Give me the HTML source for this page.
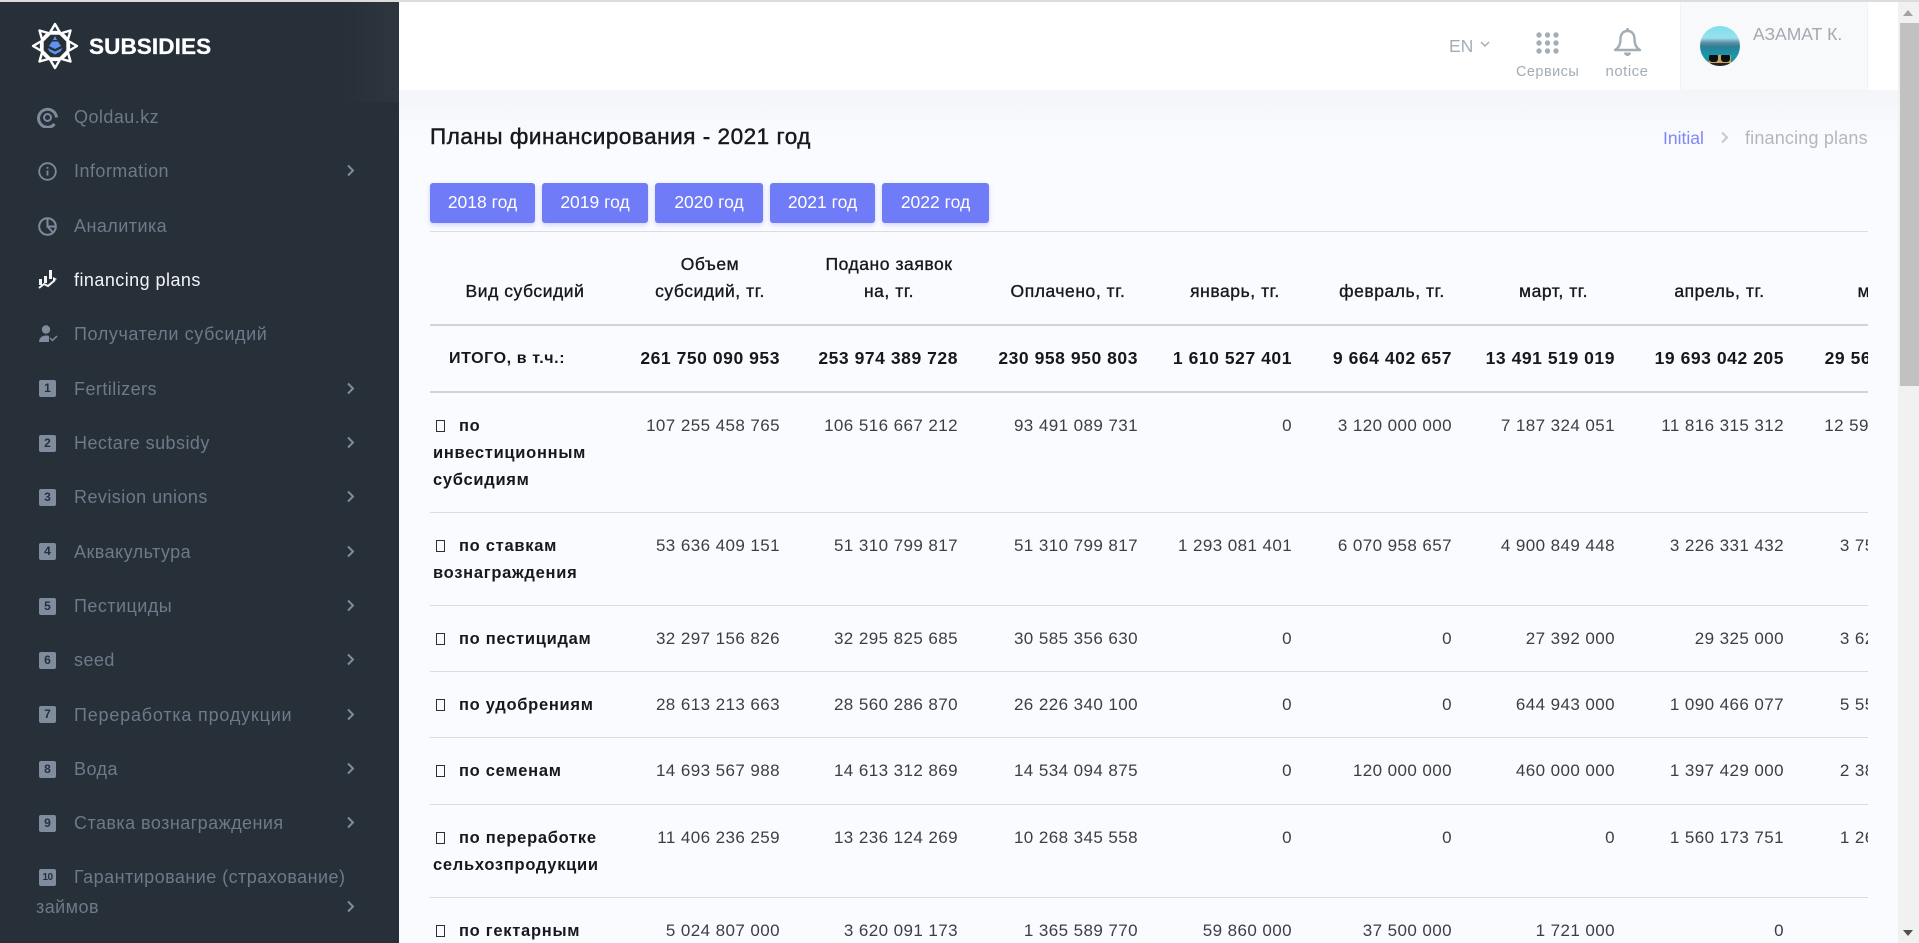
<!DOCTYPE html>
<html lang="ru"><head><meta charset="utf-8"><title>Subsidies</title>
<style>
*{box-sizing:border-box}
html,body{margin:0;padding:0;width:1919px;height:943px;overflow:hidden;background:#f9fbfe;font-family:"Liberation Sans",sans-serif}
.abs{position:absolute}
#top{position:absolute;left:0;top:0;width:1919px;height:2px;background:#dcdcdc}
#side{position:absolute;left:0;top:2px;width:399px;height:941px;background:#272f38;overflow:hidden}
#side .glow{position:absolute;left:340px;top:0;width:59px;height:100px;background:linear-gradient(90deg,#272f38,#2d353e)}
.it{position:absolute;left:74px;height:28px;line-height:28px;font-size:18px;letter-spacing:.45px;color:#6d7a8a;white-space:nowrap}
.it.on{color:#f2f4f6}
.b{position:absolute;left:39px;width:17px;height:17px;border-radius:2px;background:#7f8c9e;color:#272f38;font-size:12px;font-weight:bold;line-height:17px;text-align:center}
.ch{position:absolute;left:346px;width:9px;height:13px}
.ic{position:absolute}
#logo{position:absolute;left:89px;top:34px;font-size:22.5px;font-weight:bold;color:#fff;line-height:26px;letter-spacing:.1px;-webkit-text-stroke:.3px #fff}
#hdr{position:absolute;left:399px;top:2px;width:1499px;height:88px;background:#fff}
#prof{position:absolute;left:1680px;top:2px;width:188px;height:88px;background:#f8f9fb;border-left:1px solid #f0f2f5;border-right:1px solid #f0f2f5}
#strip{position:absolute;left:399px;top:90px;width:1499px;height:50px;background:linear-gradient(#f4f5f8,#f9fbfe)}
.hl{position:absolute;color:#a3adb5;white-space:nowrap}
#title{position:absolute;left:430px;top:123px;font-size:22.5px;line-height:28px;color:#15181c;-webkit-text-stroke:.45px #15181c;letter-spacing:.53px;white-space:nowrap}
.btn{position:absolute;top:183px;height:40px;background:#6f7bf7;border-radius:3px;color:#fff;font-size:17.5px;line-height:39px;text-align:center;box-shadow:0 2px 5px rgba(111,123,247,.3)}
#wrap{position:absolute;left:430px;top:231px;width:1438px;height:712px;overflow:hidden}
table{border-collapse:collapse;table-layout:fixed;width:1544px;position:absolute;left:0;top:0;color:#2b3038;font-size:17px;line-height:27px}
th,td{padding:0 20px;text-align:right;vertical-align:top;white-space:nowrap;letter-spacing:.42px}
th{height:93px;vertical-align:bottom;text-align:center;padding-bottom:19px;font-size:17.5px;font-weight:normal;color:#15181c;-webkit-text-stroke:.35px #15181c;border-top:1.5px solid #dadee4;border-bottom:2px solid #cfd4da;line-height:27px;letter-spacing:.55px}
tr.tot td{height:67px;font-weight:bold;color:#15181c;vertical-align:middle;border-bottom:2px solid #cfd4da;font-size:17.5px;letter-spacing:.55px;padding-left:0}
tr.r td{padding-top:19px;border-bottom:1.5px solid #d8dce3;color:#3a3f47}
td.n{text-align:left;padding:20px 0 0 3px!important;font-weight:bold;font-size:16.5px;color:#15181c!important;letter-spacing:.72px;overflow:hidden}
.tf{display:inline-block;width:9px;height:12px;border:1px solid #2b3038;margin:0 14px 0 3px;vertical-align:-1px}
#sb{position:absolute;left:1898px;top:2px;width:21px;height:941px;background:#f1f1f1}
#th{position:absolute;left:1900px;top:23px;width:19px;height:363px;background:#c1c1c1}
</style></head>
<body>
<div id="top"></div>
<div id="hdr"></div>
<div id="strip"></div>
<div id="prof"></div>

<div id="side"><div class="glow"></div></div>
<div class="abs" style="left:0;top:0;width:399px;height:943px;overflow:hidden;margin-top:0">
<svg class="ic" style="left:31px;top:22px" width="48" height="48" viewBox="0 0 48 48" fill="none" stroke="#fff" stroke-width="2.4" stroke-linejoin="round"><circle cx="24" cy="24" r="14"/><path d="M24 2l5.5 9.5h-11zM24 46l5.5-9.500h-11zM2 24l9.500-5.500v11zM46 24l-9.500-5.500v11zM8.500 8.500l10.500 3-7.500 7.500zM39.500 8.500l-10.500 3 7.500 7.500zM8.500 39.500l10.500-3-7.500-7.500zM39.500 39.500l-10.500-3 7.500-7.500z"/><path d="M24 14l2 4h-4z" fill="#5f93ee" stroke="none"/><path d="M21 19.500h6l3 4.500-6 3-6-3z" fill="#5f93ee" stroke="none"/><path d="M16.500 26l7.500 3.500 7.500-3.500-2 3.500-5.500 3-5.500-3z" fill="#5f93ee" stroke="none"/></svg>
<div id="logo">SUBSIDIES</div>

<svg class="ic" style="left:37px;top:107px" width="21" height="21" viewBox="0 0 21 21" fill="none" stroke="#7d8a9b"><path d="M17.500 17a9 9 0 1 1 2-6.500" stroke-width="3"/><circle cx="10.500" cy="10.500" r="3.500" stroke-width="2"/></svg>
<div class="it" style="top:103px">Qoldau.kz</div>

<svg class="ic" style="left:38px;top:162px" width="19" height="19" viewBox="0 0 19 19" fill="none" stroke="#7d8a9b" stroke-width="1.800"><circle cx="9.500" cy="9.500" r="8.300"/><path d="M9.500 8.500v5M9.500 5v1.800"/></svg>
<div class="it" style="top:157px">Information</div>
<svg class="ch" style="top:164px" viewBox="0 0 9 13" fill="none" stroke="#7f8c9c" stroke-width="2"><path d="M2 1.500l5 5-5 5"/></svg>

<svg class="ic" style="left:38px;top:217px" width="19" height="19" viewBox="0 0 19 19" fill="none" stroke="#7d8a9b" stroke-width="2"><circle cx="9.500" cy="9.500" r="8.300"/><path d="M9.500 1.500v8h8M9.500 9.500l5.500 6"/></svg>
<div class="it" style="top:212px">Аналитика</div>

<svg class="ic" style="left:38px;top:269px" width="20" height="20" viewBox="0 0 20 20" fill="#f2f4f6"><path d="M1 10h3v6H1zM6 7h3v7H6zM11 1h3v9h-3zM15 8l4 2-4 2z"/><path d="M1 19l5-4 4 2 7-6" fill="none" stroke="#f2f4f6" stroke-width="2"/></svg>
<div class="it on" style="top:266px">financing plans</div>

<svg class="ic" style="left:38px;top:325px" width="20" height="18" viewBox="0 0 20 18" fill="#7f8c9c"><circle cx="8" cy="4.500" r="4.200"/><path d="M1 17c0-4 3-6.500 7-6.500 1.500 0 2.500.3 3 .6V17z"/><path d="M12 13l2.500 2.500L19 11" fill="none" stroke="#7f8c9c" stroke-width="1.500"/></svg>
<div class="it" style="top:320px;letter-spacing:.6px">Получатели субсидий</div>

<div class="b" style="top:380px">1</div><div class="it" style="top:375px">Fertilizers</div>
<svg class="ch" style="top:382px" viewBox="0 0 9 13" fill="none" stroke="#7f8c9c" stroke-width="2"><path d="M2 1.500l5 5-5 5"/></svg>
<div class="b" style="top:435px">2</div><div class="it" style="top:429px">Hectare subsidy</div>
<svg class="ch" style="top:436px" viewBox="0 0 9 13" fill="none" stroke="#7f8c9c" stroke-width="2"><path d="M2 1.500l5 5-5 5"/></svg>
<div class="b" style="top:489px">3</div><div class="it" style="top:483px">Revision unions</div>
<svg class="ch" style="top:490px" viewBox="0 0 9 13" fill="none" stroke="#7f8c9c" stroke-width="2"><path d="M2 1.500l5 5-5 5"/></svg>
<div class="b" style="top:543px">4</div><div class="it" style="top:538px">Аквакультура</div>
<svg class="ch" style="top:545px" viewBox="0 0 9 13" fill="none" stroke="#7f8c9c" stroke-width="2"><path d="M2 1.500l5 5-5 5"/></svg>
<div class="b" style="top:598px">5</div><div class="it" style="top:592px">Пестициды</div>
<svg class="ch" style="top:599px" viewBox="0 0 9 13" fill="none" stroke="#7f8c9c" stroke-width="2"><path d="M2 1.500l5 5-5 5"/></svg>
<div class="b" style="top:652px">6</div><div class="it" style="top:646px">seed</div>
<svg class="ch" style="top:653px" viewBox="0 0 9 13" fill="none" stroke="#7f8c9c" stroke-width="2"><path d="M2 1.500l5 5-5 5"/></svg>
<div class="b" style="top:706px">7</div><div class="it" style="top:701px;letter-spacing:.8px">Переработка продукции</div>
<svg class="ch" style="top:708px" viewBox="0 0 9 13" fill="none" stroke="#7f8c9c" stroke-width="2"><path d="M2 1.500l5 5-5 5"/></svg>
<div class="b" style="top:761px">8</div><div class="it" style="top:755px">Вода</div>
<svg class="ch" style="top:762px" viewBox="0 0 9 13" fill="none" stroke="#7f8c9c" stroke-width="2"><path d="M2 1.500l5 5-5 5"/></svg>
<div class="b" style="top:815px">9</div><div class="it" style="top:809px">Ставка вознаграждения</div>
<svg class="ch" style="top:816px" viewBox="0 0 9 13" fill="none" stroke="#7f8c9c" stroke-width="2"><path d="M2 1.500l5 5-5 5"/></svg>
<div class="b" style="top:869px;font-size:10px;letter-spacing:-.5px">10</div><div class="it" style="top:863px">Гарантирование (страхование)</div>
<div class="it" style="top:893px;left:36px">займов</div>
<svg class="ch" style="top:900px" viewBox="0 0 9 13" fill="none" stroke="#7f8c9c" stroke-width="2"><path d="M2 1.500l5 5-5 5"/></svg>
</div>

<div class="hl" style="left:1449px;top:34px;font-size:17.500px;line-height:24px">EN</div>
<svg class="abs" style="left:1480px;top:41px" width="10" height="7" viewBox="0 0 10 7" fill="none" stroke="#a3adb5" stroke-width="1.500"><path d="M1 1l4 4 4-4"/></svg>
<svg class="abs" style="left:1535px;top:31px" width="25" height="24" viewBox="0 0 25 24" fill="#a3adb5"><circle cx="4" cy="4" r="2.700"/><circle cx="12.500" cy="4" r="2.700"/><circle cx="21" cy="4" r="2.700"/><circle cx="4" cy="12" r="2.700"/><circle cx="12.500" cy="12" r="2.700"/><circle cx="21" cy="12" r="2.700"/><circle cx="4" cy="20" r="2.700"/><circle cx="12.500" cy="20" r="2.700"/><circle cx="21" cy="20" r="2.700"/></svg>
<div class="hl" style="left:1516px;top:62px;width:62px;text-align:center;font-size:14.500px;line-height:20px;letter-spacing:.45px">Сервисы</div>
<svg class="abs" style="left:1613px;top:27px" width="29" height="30" viewBox="0 0 29 30" fill="none" stroke="#a3adb5" stroke-width="2.400" stroke-linejoin="round"><path d="M14.500 4c-5 0-7 4-7 8 0 6-2 9-5.500 11h25c-3.500-2-5.500-5-5.500-11 0-4-2-8-7-8z"/><circle cx="14.500" cy="2.500" r="1.500" fill="#a3adb5" stroke="none"/><path d="M11 25.500a3.500 3.500 0 0 0 7 0z" fill="#a3adb5" stroke="none"/></svg>
<div class="hl" style="left:1597px;top:62px;width:60px;text-align:center;font-size:15px;line-height:20px;letter-spacing:.5px">notice</div>

<div class="abs" style="left:1700px;top:26px;width:40px;height:40px;border-radius:50%;overflow:hidden;background:linear-gradient(#7fdff0 0,#9adfec 30%,#5e8ca3 42%,#2c7f98 52%,#149bac 75%,#1a8c96 90%)">
<div class="abs" style="left:9px;top:29px;width:22px;height:8px;background:#c9a266"></div>
<div class="abs" style="left:9px;top:29px;width:9px;height:7px;background:#0e0e0e;border-radius:1px 1px 3px 3px"></div>
<div class="abs" style="left:21px;top:29px;width:9px;height:7px;background:#0e0e0e;border-radius:1px 1px 3px 3px"></div>
<div class="abs" style="left:0;top:37px;width:40px;height:3px;background:#222"></div>
</div>
<div class="hl" style="left:1753px;top:22px;font-size:17.500px;line-height:24px;color:#a3a9b0">АЗАМАТ К.</div>

<div id="title">Планы финансирования - 2021 год</div>
<div class="hl" style="left:1663px;top:126px;font-size:17.500px;line-height:24px;color:#7f87f6">Initial</div>
<svg class="abs" style="left:1720px;top:131px" width="9" height="13" viewBox="0 0 9 13" fill="none" stroke="#c5cad0" stroke-width="2"><path d="M2 1.500l5 5-5 5"/></svg>
<div class="hl" style="left:1745px;top:126px;font-size:18px;line-height:24px;letter-spacing:.18px;color:#b2b7bf">financing plans</div>

<div class="btn" style="left:430px;width:105px">2018 год</div>
<div class="btn" style="left:542px;width:106px">2019 год</div>
<div class="btn" style="left:655px;width:108px">2020 год</div>
<div class="btn" style="left:770px;width:105px">2021 год</div>
<div class="btn" style="left:882px;width:107px">2022 год</div>

<div id="wrap">
<table>
<colgroup><col style="width:190px"><col style="width:180px"><col style="width:178px"><col style="width:180px"><col style="width:154px"><col style="width:160px"><col style="width:163px"><col style="width:169px"><col style="width:170px"></colgroup>
<tr><th>Вид субсидий</th><th>Объем<br>субсидий, тг.</th><th>Подано заявок<br>на, тг.</th><th>Оплачено, тг.</th><th>январь, тг.</th><th>февраль, тг.</th><th>март, тг.</th><th>апрель, тг.</th><th>май, тг.</th></tr>
<tr class="tot"><td style="text-align:left;padding-left:19px;font-size:16px;letter-spacing:.6px">ИТОГО, в т.ч.:</td><td>261 750 090 953</td><td>253 974 389 728</td><td>230 958 950 803</td><td>1 610 527 401</td><td>9 664 402 657</td><td>13 491 519 019</td><td>19 693 042 205</td><td>29 561 204 870</td></tr>
<tr class="r" style="height:121px"><td class="n"><span class="tf"></span>по<br>инвестиционным<br>субсидиям</td><td>107 255 458 765</td><td>106 516 667 212</td><td>93 491 089 731</td><td>0</td><td>3 120 000 000</td><td>7 187 324 051</td><td>11 816 315 312</td><td style="padding-right:27px">12 594 118 306</td></tr>
<tr class="r" style="height:93px"><td class="n"><span class="tf"></span>по ставкам<br>вознаграждения</td><td>53 636 409 151</td><td>51 310 799 817</td><td>51 310 799 817</td><td>1 293 081 401</td><td>6 070 958 657</td><td>4 900 849 448</td><td>3 226 331 432</td><td>3 754 906 120</td></tr>
<tr class="r" style="height:66px"><td class="n"><span class="tf"></span>по пестицидам</td><td>32 297 156 826</td><td>32 295 825 685</td><td>30 585 356 630</td><td>0</td><td>0</td><td>27 392 000</td><td>29 325 000</td><td>3 622 000 000</td></tr>
<tr class="r" style="height:66px"><td class="n"><span class="tf"></span>по удобрениям</td><td>28 613 213 663</td><td>28 560 286 870</td><td>26 226 340 100</td><td>0</td><td>0</td><td>644 943 000</td><td>1 090 466 077</td><td>5 553 120 400</td></tr>
<tr class="r" style="height:67px"><td class="n"><span class="tf"></span>по семенам</td><td>14 693 567 988</td><td>14 613 312 869</td><td>14 534 094 875</td><td>0</td><td>120 000 000</td><td>460 000 000</td><td>1 397 429 000</td><td>2 386 000 000</td></tr>
<tr class="r" style="height:93px"><td class="n"><span class="tf"></span>по переработке<br>сельхозпродукции</td><td>11 406 236 259</td><td>13 236 124 269</td><td>10 268 345 558</td><td>0</td><td>0</td><td>0</td><td>1 560 173 751</td><td>1 264 700 000</td></tr>
<tr class="r" style="height:66px"><td class="n"><span class="tf"></span>по гектарным</td><td>5 024 807 000</td><td>3 620 091 173</td><td>1 365 589 770</td><td>59 860 000</td><td>37 500 000</td><td>1 721 000</td><td>0</td><td>0</td></tr>
</table>
</div>

<div id="sb"></div>
<div id="th"></div>
<svg class="abs" style="left:1903px;top:10px" width="10" height="6" viewBox="0 0 10 6"><path d="M5 0l5 6H0z" fill="#a3a3a3"/></svg>
<svg class="abs" style="left:1903px;top:930px" width="10" height="6" viewBox="0 0 10 6"><path d="M0 0h10L5 6z" fill="#505050"/></svg>
</body></html>
